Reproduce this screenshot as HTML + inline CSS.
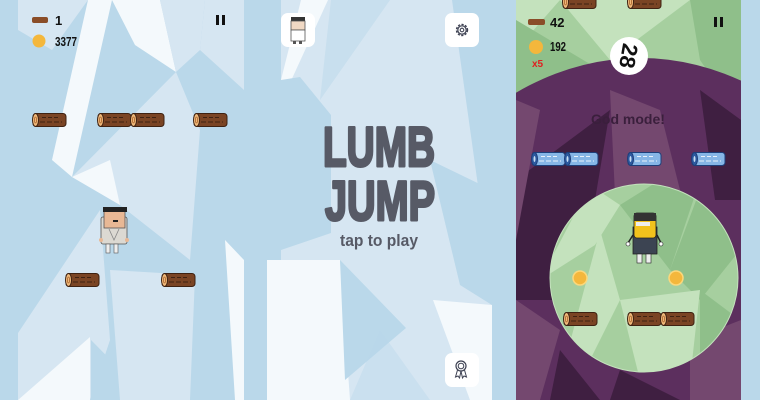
<!DOCTYPE html>
<html><head><meta charset="utf-8"><style>
html,body{margin:0;padding:0;background:#bad8ea;width:760px;height:400px;overflow:hidden}
svg{display:block}
text{font-family:"Liberation Sans",sans-serif}
</style></head><body>
<svg width="760" height="400" viewBox="0 0 760 400" xmlns="http://www.w3.org/2000/svg">
<defs>
<g id="log">
<rect x="1" y="0.5" width="33" height="13" rx="3" fill="#7a4424" stroke="#3f2212" stroke-width="1"/>
<line x1="10" y1="4.5" x2="28" y2="4.5" stroke="#3f2212" stroke-width="1" stroke-dasharray="4 2"/>
<line x1="8" y1="9" x2="30" y2="9" stroke="#3f2212" stroke-width="1" stroke-dasharray="5 2"/>
<ellipse cx="3.5" cy="7" rx="3" ry="6.5" fill="#f0b97a" stroke="#3f2212" stroke-width="1"/>
<ellipse cx="3.5" cy="7" rx="1" ry="3" fill="none" stroke="#a8622c" stroke-width="0.8"/>
</g>
<g id="blog">
<rect x="1" y="0.5" width="33" height="13" rx="3" fill="#86b6e6" stroke="#1e3f7a" stroke-width="1"/>
<line x1="10" y1="4.5" x2="28" y2="4.5" stroke="#e8f2fb" stroke-width="1" stroke-dasharray="4 2"/>
<line x1="8" y1="9" x2="30" y2="9" stroke="#e8f2fb" stroke-width="1" stroke-dasharray="5 2"/>
<ellipse cx="3.5" cy="7" rx="3" ry="6.5" fill="#2c5aa0" stroke="#1e3f7a" stroke-width="1"/>
<ellipse cx="3.5" cy="7" rx="1" ry="3" fill="#c6ddf3"/>
</g>
<clipPath id="c1"><rect x="18" y="0" width="226" height="400"/></clipPath>
<clipPath id="c2"><rect x="267" y="0" width="225" height="400"/></clipPath>
<clipPath id="c3"><rect x="516" y="0" width="225" height="400"/></clipPath>
<clipPath id="circ"><circle cx="644" cy="278" r="94"/></clipPath>
</defs>

<!-- Screen 1 -->
<g clip-path="url(#c1)">
<rect x="18" y="0" width="226" height="400" fill="#bad8ea"/>
<polygon points="18,0 88,0 52,50 18,30" fill="#d6e6f2"/>
<polygon points="88,0 112,0 72,177 52,160" fill="#f4f9fc"/>
<polygon points="112,0 160,0 176,72 135,45" fill="#f4f9fc"/>
<polygon points="160,0 205,0 200,50 176,72" fill="#d6e6f2"/>
<polygon points="205,0 244,0 244,90 200,50" fill="#d6e6f2"/>
<polygon points="72,177 176,72 200,130 190,260 120,205" fill="#d6e6f2"/>
<polygon points="72,177 110,160 120,205" fill="#f4f9fc"/>
<polygon points="18,333 100,210 110,340 90,400 18,400" fill="#d6e6f2"/>
<polygon points="18,400 90,337 90,400" fill="#f4f9fc"/>
<polygon points="91,340 150,400 91,400" fill="#bad8ea"/>
<polygon points="110,270 195,275 190,400 120,400" fill="#d6e6f2"/>
<polygon points="225,240 244,260 244,400 235,400" fill="#f4f9fc"/>
</g>

<!-- Screen 2 -->
<g clip-path="url(#c2)">
<rect x="267" y="0" width="225" height="400" fill="#d6e6f2"/>
<rect x="267" y="0" width="14" height="400" fill="#bad8ea"/>
<polygon points="301,0 328,0 290,83 281,80" fill="#f4f9fc"/>
<polygon points="281,80 300,77 331,115 331,233 281,250" fill="#bad8ea"/>
<polygon points="331,0 390,0 320,100" fill="#bad8ea" opacity="0.5"/>
<polygon points="452,0 492,0 492,190 478,186" fill="#bad8ea"/>
<polygon points="430,160 492,190 492,305 460,285" fill="#bad8ea"/>
<polygon points="267,260 340,260 350,400 267,400" fill="#f4f9fc"/>
<polygon points="340,260 406,328 345,380" fill="#bad8ea"/>
<polygon points="433,300 492,305 492,400 470,400" fill="#f4f9fc"/>
<polygon points="380,330 430,400 350,400" fill="#bad8ea" opacity="0.4"/>
</g>
<!-- title -->
<g fill="#575a66" stroke="#575a66" stroke-width="3" stroke-linejoin="round" font-weight="bold">
<text x="379" y="166" text-anchor="middle" font-size="56" textLength="112" lengthAdjust="spacingAndGlyphs">LUMB</text>
<text x="380" y="220" text-anchor="middle" font-size="56" textLength="110" lengthAdjust="spacingAndGlyphs">JUMP</text>
</g>
<text x="379" y="246" text-anchor="middle" font-size="17" font-weight="bold" fill="#575a66" textLength="78" lengthAdjust="spacingAndGlyphs">tap to play</text>
<!-- buttons -->
<rect x="281" y="13" width="34" height="34" rx="7" fill="#fff"/>
<rect x="445" y="13" width="34" height="34" rx="7" fill="#fff"/>
<rect x="445" y="353" width="34" height="34" rx="7" fill="#fff"/>
<!-- mini char -->
<rect x="291" y="17" width="14" height="4" fill="#333"/>
<rect x="291" y="21" width="14" height="9" fill="#f1d9c4" stroke="#555" stroke-width="0.8"/>
<rect x="291" y="30" width="14" height="11" fill="#fff" stroke="#555" stroke-width="0.8"/>
<rect x="293" y="41" width="3" height="3" fill="#555"/><rect x="299" y="41" width="3" height="3" fill="#555"/>
<!-- gear -->
<circle cx="462" cy="30" r="5.5" fill="none" stroke="#3d4152" stroke-width="1.4" stroke-dasharray="2.2 1.4"/>
<circle cx="462" cy="30" r="4.2" fill="none" stroke="#3d4152" stroke-width="1.2"/>
<circle cx="462" cy="30" r="1.8" fill="none" stroke="#3d4152" stroke-width="1.1"/>
<!-- ribbon -->
<circle cx="461" cy="366" r="5" fill="none" stroke="#3d4152" stroke-width="1.2"/>
<circle cx="461" cy="366" r="2.8" fill="none" stroke="#3d4152" stroke-width="1"/>
<path d="M457.5 370 L455.5 377 L458 376 L459.5 378 L461 371 M464.5 370 L466.5 377 L464 376 L462.5 378 L461 371" fill="none" stroke="#3d4152" stroke-width="1"/>

<!-- Screen 3 -->
<g clip-path="url(#c3)">
<rect x="516" y="0" width="225" height="400" fill="#a6cf9f"/>
<polygon points="516,0 560,0 516,50" fill="#c4e2bd"/>
<polygon points="560,0 610,60 690,0" fill="#c4e2bd"/>
<polygon points="516,20 600,70 560,120 516,110" fill="#8fbf8a"/>
<polygon points="690,0 741,0 741,120 700,60" fill="#8fbf8a"/>
<ellipse cx="640" cy="420" rx="290" ry="362" fill="#5c2f5e"/>
<polygon points="516,180 610,110 590,230 560,300 516,300" fill="#3f1f41"/>
<polygon points="610,90 660,110 690,230 620,300" fill="#74486f"/>
<polygon points="700,90 741,120 741,200 715,200" fill="#3f1f41"/>
<polygon points="516,300 560,330 540,400 516,400" fill="#74486f"/>
<polygon points="560,350 600,400 550,400" fill="#3f1f41"/>
<polygon points="690,340 741,320 741,400 690,400" fill="#74486f"/>
<polygon points="620,370 680,400 610,400" fill="#3f1f41"/>
<polygon points="516,240 516,100 540,110" fill="#74486f"/>
</g>
<g clip-path="url(#circ)">
<rect x="540" y="180" width="210" height="200" fill="#a6cf9f"/>
<polygon points="590,185 620,205 595,245 540,280" fill="#c4e2bd"/>
<polygon points="620,205 670,270 700,180 660,180" fill="#8fbf8a"/>
<polygon points="600,230 620,300 580,380 560,380" fill="#c4e2bd"/>
<polygon points="670,270 700,300 740,250 700,190" fill="#8fbf8a"/>
<polygon points="620,300 700,290 690,380 640,380" fill="#c4e2bd"/>
<polygon points="700,290 740,320 740,380 700,380" fill="#8fbf8a"/>
</g>
<circle cx="644" cy="278" r="94" fill="none" stroke="#c4e2bd" stroke-width="1"/>
<text x="628" y="124" text-anchor="middle" font-size="14" font-weight="bold" fill="#3a1f3c">God mode!</text>
<!-- timer -->
<circle cx="629" cy="56" r="19" fill="#fff"/>
<text x="629" y="56" text-anchor="middle" font-size="22" font-weight="bold" fill="#111" transform="rotate(100 629 56) translate(0 8)">28</text>
<!-- coins -->
<circle cx="580" cy="278" r="7" fill="#f4b73c" stroke="#fbd87c" stroke-width="1.5"/>
<circle cx="676" cy="278" r="7" fill="#f4b73c" stroke="#fbd87c" stroke-width="1.5"/>

<!-- logs screen1 -->
<use href="#log" x="32" y="113"/><use href="#log" x="97" y="113"/><use href="#log" x="130" y="113"/><use href="#log" x="193" y="113"/>
<use href="#log" x="65" y="273"/><use href="#log" x="161" y="273"/>
<!-- logs screen3 -->
<use href="#log" x="562" y="-5"/><use href="#log" x="627" y="-5"/>
<use href="#blog" x="531" y="152"/><use href="#blog" x="564" y="152"/><use href="#blog" x="627" y="152"/><use href="#blog" x="691" y="152"/>
<use href="#log" x="563" y="312"/><use href="#log" x="627" y="312"/><use href="#log" x="660" y="312"/>

<!-- HUD screen1 -->
<rect x="32" y="17" width="16" height="6" rx="2" fill="#8a4d28"/>
<text x="55" y="25" font-size="13" font-weight="bold" fill="#111">1</text>
<circle cx="39" cy="41" r="6.5" fill="#f4b73c"/>
<text x="55" y="46" font-size="13" font-weight="bold" fill="#111" textLength="22" lengthAdjust="spacingAndGlyphs">3377</text>
<rect x="216" y="15" width="3" height="10" fill="#111"/><rect x="222" y="15" width="3" height="10" fill="#111"/>
<!-- HUD screen3 -->
<rect x="528" y="19" width="17" height="6" rx="2" fill="#8a4d28"/>
<text x="550" y="27" font-size="13" font-weight="bold" fill="#111">42</text>
<circle cx="536" cy="47" r="7" fill="#f4b73c"/>
<text x="550" y="51" font-size="13" font-weight="bold" fill="#111" textLength="16" lengthAdjust="spacingAndGlyphs">192</text>
<text x="532" y="67" font-size="10" font-weight="bold" fill="#e02020">x5</text>
<rect x="714" y="17" width="3" height="10" fill="#111"/><rect x="720" y="17" width="3" height="10" fill="#111"/>

<!-- char screen1 -->
<g>
<rect x="101" y="217" width="26" height="27" rx="2" fill="#dcd9d2" stroke="#555" stroke-width="0.8"/>
<path d="M109 229 L114 240 L119 229" fill="none" stroke="#888" stroke-width="0.8"/>
<rect x="104" y="209" width="21" height="19" fill="#e8b895" stroke="#555" stroke-width="0.8"/>
<rect x="103" y="207" width="24" height="5" fill="#222"/>
<rect x="113" y="220" width="5" height="2" fill="#222"/>
<rect x="106" y="244" width="4" height="9" fill="#eee" stroke="#555" stroke-width="0.6"/>
<rect x="114" y="244" width="4" height="9" fill="#eee" stroke="#555" stroke-width="0.6"/>
<circle cx="101" cy="240" r="2" fill="#e8b895"/><circle cx="127" cy="240" r="2" fill="#e8b895"/>
</g>
<!-- char screen3 -->
<g>
<rect x="633" y="227" width="24" height="27" fill="#3c4452" stroke="#222" stroke-width="0.8"/>
<rect x="634" y="213" width="22" height="25" rx="3" fill="#f2c21c" stroke="#222" stroke-width="0.8"/>
<rect x="634" y="213" width="22" height="8" fill="#333"/>
<rect x="636" y="222" width="14" height="4" fill="#eee"/>
<line x1="633" y1="235" x2="628" y2="243" stroke="#222" stroke-width="1.5"/>
<line x1="657" y1="235" x2="661" y2="243" stroke="#222" stroke-width="1.5"/>
<circle cx="628" cy="244" r="2" fill="#fff" stroke="#222" stroke-width="0.6"/>
<circle cx="661" cy="244" r="2" fill="#fff" stroke="#222" stroke-width="0.6"/>
<rect x="637" y="254" width="5" height="9" fill="#eee" stroke="#222" stroke-width="0.6"/>
<rect x="646" y="254" width="5" height="9" fill="#eee" stroke="#222" stroke-width="0.6"/>
</g>
</svg>
</body></html>
